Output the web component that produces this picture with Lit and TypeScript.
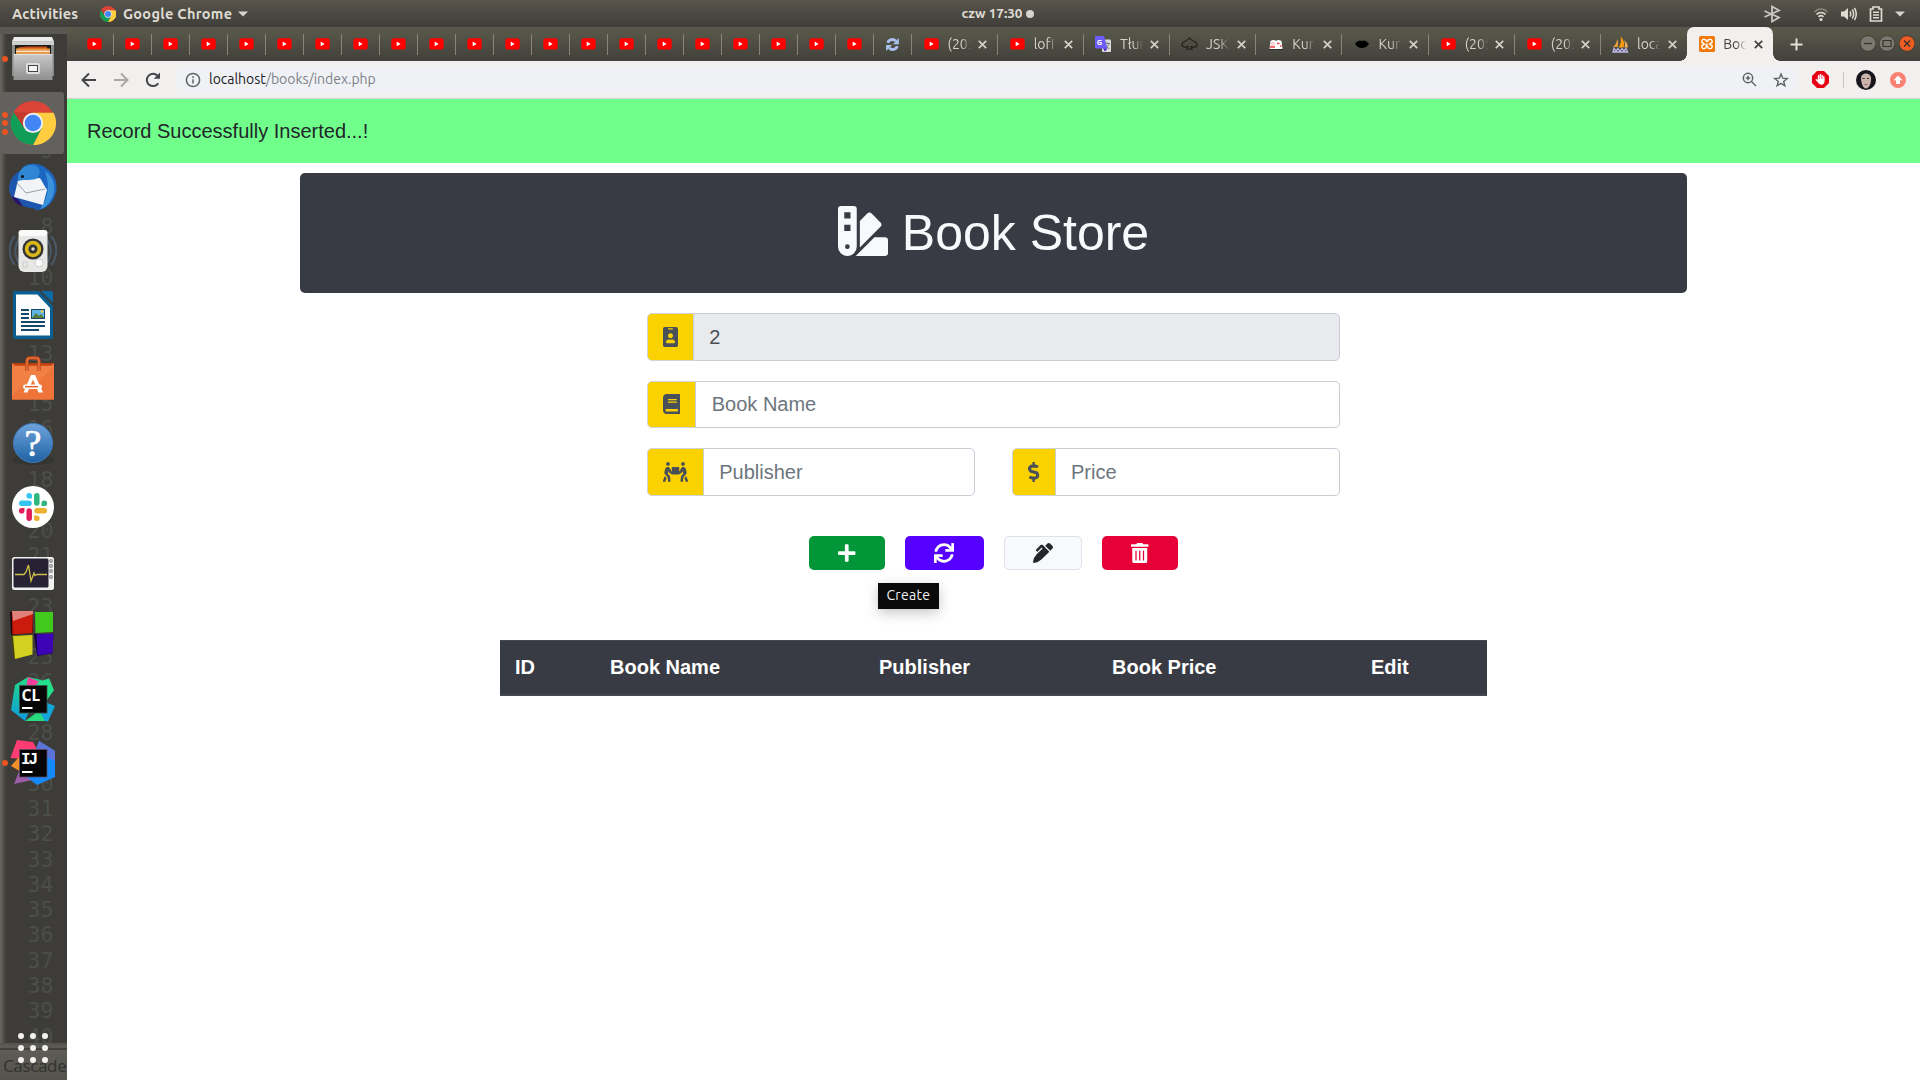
import { LitElement, html, css, svg } from "lit";
import { customElement, property } from "lit/decorators.js";

const FA: Record<string, [number, string]> = {
  swatch: [512, "M434.66,167.71h0L344.5,77.36a31.83,31.83,0,0,0-45-.07h0l-.07.07L224,152.88V424L434.66,212.9A32,32,0,0,0,434.66,167.71ZM480,320H373.09L186.68,506.51c-2.06,2.07-4.5,3.58-6.68,5.49H480a32,32,0,0,0,32-32V352A32,32,0,0,0,480,320ZM192,32A32,32,0,0,0,160,0H32A32,32,0,0,0,0,32V416a96,96,0,0,0,192,0ZM96,440a24,24,0,1,1,24-24A24,24,0,0,1,96,440Zm32-184H64V192h64Zm0-128H64V64h64Z"],
  badge: [384, "M336 0H48C21.5 0 0 21.5 0 48v416c0 26.5 21.5 48 48 48h288c26.5 0 48-21.5 48-48V48c0-26.5-21.5-48-48-48zM144 32h96c8.8 0 16 7.2 16 16s-7.2 16-16 16h-96c-8.8 0-16-7.2-16-16s7.2-16 16-16zm48 128c35.3 0 64 28.7 64 64s-28.7 64-64 64-64-28.7-64-64 28.7-64 64-64zm112 236.8c0 10.6-10 19.2-22.4 19.2H102.4C90 416 80 407.4 80 396.8v-19.2c0-31.8 30.1-57.6 67.2-57.6h5c12.3 5.1 25.7 8 39.8 8s27.6-2.9 39.8-8h5c37.1 0 67.2 25.8 67.2 57.6v19.2z"],
  book: [448, "M448 360V24c0-13.3-10.7-24-24-24H96C43 0 0 43 0 96v320c0 53 43 96 96 96h328c13.3 0 24-10.7 24-24v-16c0-7.5-3.5-14.3-8.9-18.7-4.2-15.4-4.2-59.3 0-74.7 5.4-4.3 8.9-11.1 8.9-18.6zM128 134c0-3.3 2.7-6 6-6h212c3.3 0 6 2.7 6 6v20c0 3.3-2.7 6-6 6H134c-3.3 0-6-2.7-6-6v-20zm0 64c0-3.3 2.7-6 6-6h212c3.3 0 6 2.7 6 6v20c0 3.3-2.7 6-6 6H134c-3.3 0-6-2.7-6-6v-20zm253.4 250H96c-17.7 0-32-14.3-32-32 0-17.6 14.4-32 32-32h285.4c-1.9 17.1-1.9 46.9 0 64z"],
  people: [640, "M128 96c26.5 0 48-21.5 48-48S154.5 0 128 0 80 21.5 80 48s21.5 48 48 48zm384 0c26.5 0 48-21.5 48-48S538.5 0 512 0s-48 21.5-48 48 21.5 48 48 48zm125.7 372.1l-44-110-41.1 46.4-2 18.2 27.7 69.2c5 12.5 17 20.1 29.7 20.1 4 0 8-.7 11.9-2.3 16.4-6.6 24.4-25.2 17.8-41.6zm-34.2-209.8L585 178.1c-4.6-20-18.6-36.8-37.5-44.9-18.5-8-39-6.7-56.1 3.3-22.7 13.4-39.7 34.5-48.1 59.4L432 229.8 416 240v-96c0-8.8-7.2-16-16-16H240c-8.8 0-16 7.2-16 16v96l-16.1-10.2-11.3-33.9c-8.3-25-25.4-46-48.1-59.4-17.2-10-37.6-11.3-56.1-3.3-18.9 8.1-32.9 24.9-37.5 44.9l-18.4 80.2c-4.6 20 .7 41.2 14.4 56.7l67.2 75.9 10.1 92.6C130 499.8 143.8 512 160 512c1.2 0 2.3-.1 3.5-.2 17.6-1.9 30.2-17.7 28.3-35.3l-10.1-92.8c-1.5-13-6.9-25.1-15.6-35l-43.3-49 17.6-70.3 6.8 20.4c4.1 12.5 11.9 23.4 24.5 32.6l51.1 32.5c4.6 2.9 12.1 4.6 17.2 5h160c5.1-.4 12.6-2.1 17.2-5l51.1-32.5c12.6-9.2 20.4-20 24.5-32.6l6.8-20.4 17.6 70.3-43.3 49c-8.7 9.9-14.1 22-15.6 35l-10.1 92.8c-1.9 17.6 10.8 33.4 28.3 35.3 1.2.1 2.3.2 3.5.2 16.1 0 30-12.1 31.8-28.5l10.1-92.6 67.2-75.9c13.6-15.5 19-36.7 14.4-56.7zM46.3 358.1l-44 110c-6.6 16.4 1.4 35 17.8 41.6 16.8 6.6 35.1-1.7 41.6-17.8l27.7-69.2-2-18.2-41.1-46.4z"],
  dollar: [288, "M209.2 233.4l-108-31.6C88.7 198.2 80 186.5 80 173.5c0-16.3 13.2-29.5 29.5-29.5h66.3c12.2 0 24.2 3.7 34.2 10.5 6.1 4.1 14.3 3.1 19.5-2l34.8-34c7.1-6.9 6.1-18.4-1.8-24.5C238 74.8 207.4 64.1 176 64V16c0-8.8-7.2-16-16-16h-32c-8.8 0-16 7.2-16 16v48h-2.5C45.8 64-5.4 118.7.5 183.6c4.2 46.1 39.4 83.6 83.8 96.6l102.5 30c12.5 3.7 21.2 15.3 21.2 28.3 0 16.3-13.2 29.5-29.5 29.5h-66.3C100 368 88 364.3 78 357.5c-6.1-4.1-14.3-3.1-19.5 2l-34.8 34c-7.1 6.9-6.1 18.4 1.8 24.5 24.5 19.2 55.1 29.9 86.5 30v48c0 8.8 7.2 16 16 16h32c8.8 0 16-7.2 16-16v-48.2c46.6-.9 90.3-28.6 105.7-72.7 21.5-61.6-14.6-124.8-72.5-141.7z"],
  plus: [448, "M416 208H272V64c0-17.67-14.33-32-32-32h-32c-17.67 0-32 14.33-32 32v144H32c-17.67 0-32 14.33-32 32v32c0 17.67 14.33 32 32 32h144v144c0 17.67 14.33 32 32 32h32c17.67 0 32-14.33 32-32V304h144c17.67 0 32-14.33 32-32v-32c0-17.67-14.33-32-32-32z"],
  sync: [512, "M440.65 12.57l4 82.77A247.16 247.16 0 0 0 255.83 8C134.73 8 33.91 94.92 12.29 209.82A12 12 0 0 0 24.09 224h49.05a12 12 0 0 0 11.67-9.26 175.91 175.91 0 0 1 317-56.94l-101.46-4.86a12 12 0 0 0-12.57 12v47.41a12 12 0 0 0 12 12H500a12 12 0 0 0 12-12V12a12 12 0 0 0-12-12h-47.37a12 12 0 0 0-11.98 12.57zM255.83 432a175.61 175.61 0 0 1-146-77.8l101.8 4.87a12 12 0 0 0 12.57-12v-47.4a12 12 0 0 0-12-12H12a12 12 0 0 0-12 12V500a12 12 0 0 0 12 12h47.35a12 12 0 0 0 12-12.6l-4.15-82.57A247.17 247.17 0 0 0 255.83 504c121.11 0 221.93-86.92 243.55-201.82a12 12 0 0 0-11.8-14.18h-49.05a12 12 0 0 0-11.67 9.26A175.86 175.86 0 0 1 255.83 432z"],
  pen: [512, "M497.94 74.17l-60.11-60.11c-18.75-18.75-49.16-18.75-67.91 0l-56.55 56.55 128.02 128.02 56.55-56.55c18.75-18.75 18.75-49.15 0-67.91zm-246.8-20.53c-15.62-15.62-40.94-15.62-56.56 0L75.8 172.43c-6.25 6.25-6.25 16.38 0 22.62l22.63 22.63c6.25 6.25 16.38 6.25 22.63 0l101.82-101.82 22.63 22.62L93.95 290.03A327.038 327.038 0 0 0 .17 485.11l-.03.23c-1.7 15.28 11.21 28.2 26.49 26.51a327.02 327.02 0 0 0 195.34-93.8l196.79-196.79-82.77-82.77-84.85-84.85z"],
  trash: [448, "M32 464a48 48 0 0 0 48 48h288a48 48 0 0 0 48-48V128H32zm272-256a16 16 0 0 1 32 0v224a16 16 0 0 1-32 0zm-96 0a16 16 0 0 1 32 0v224a16 16 0 0 1-32 0zm-96 0a16 16 0 0 1 32 0v224a16 16 0 0 1-32 0zM432 32H312l-9.4-18.7A24 24 0 0 0 281.1 0H166.8a23.72 23.72 0 0 0-21.4 13.3L136 32H16A16 16 0 0 0 0 48v32a16 16 0 0 0 16 16h416a16 16 0 0 0 16-16V48a16 16 0 0 0-16-16z"],
};

const fa = (name: string, size = 20) => {
  const [w, d] = FA[name];
  return html`<svg width=${(w / 512) * size} height=${size} viewBox="0 0 ${w} 512" fill="currentColor"><path d=${d}></path></svg>`;
};

const chromeArt = svg`
  <circle cx="24" cy="24" r="24" fill="#db4437"/>
  <path d="M24 13H46.4A24 24 0 0 1 24 48L33.5 29.5Z" fill="#ffcd40"/>
  <path d="M3.2 12A24 24 0 0 0 24 48L33.5 29.5L24 35L14.5 29.5Z" fill="#0f9d58"/>
  <path d="M3.2 12L14.5 29.5L24 13Z" fill="#c23b2e"/>
  <circle cx="24" cy="24" r="11" fill="#f1f1f1"/><circle cx="24" cy="24" r="9" fill="#4285f4"/>`;

const youtube = html`<svg width="15" height="12" viewBox="0 0 15 12"><rect x=".3" y=".3" width="14.4" height="11.2" rx="2.6" fill="#f00"/><path d="M5.7 3.6L9.6 5.9L5.7 8.2Z" fill="#fff"/></svg>`;

const ICONS: Record<string, unknown> = {
  youtube,
  reload: html`<svg width="15" height="15" viewBox="0 0 16 16"><g fill="none" stroke="#a9c3ee" stroke-width="3"><path d="M2.8 6.2C4.5 2.2 9 1.7 11.6 4.2"/><path d="M13.2 9.8C11.5 13.8 7 14.3 4.4 11.8"/></g><path d="M14.8 1V7.6H8.4ZM1.2 15V8.4H7.6Z" fill="#a9c3ee"/></svg>`,
  translate: html`<svg width="16" height="16" viewBox="0 0 16 16"><rect x="7" y="3.4" width="9" height="12.6" rx="1" fill="#dcdcdc"/><path d="M9 7.5h6M12 6v1.5M14 7.5c-.6 2.5-2 4-4 5M10.5 9c1 2 2 3 4 3.600" stroke="#7b7f86" fill="none"/><path d="M1 0H9L12.4 12.500H1A1 1 0 0 1 0 11.500V1A1 1 0 0 1 1 0Z" fill="#6a5cf5"/><path d="M8 12.500H12.400L10 15.600Z" fill="#4719c9"/><text x="1.800" y="9.200" font-size="7.500" font-weight="700" font-family="Noto Sans, sans-serif" fill="#fff">G</text></svg>`,
  spade: html`<svg width="17" height="16" viewBox="0 0 17 16" fill="none" stroke="#24241f" stroke-width="1.300"><path d="M8.500 2C10.500 5 16 5.500 16 8.500C16 11.500 11.500 11.800 9.800 10.200L11 13.200H6L7.200 10.200C5.500 11.800 1 11.500 1 8.500C1 5.500 6.500 5 8.500 2Z"/></svg>`,
  openbook: html`<svg width="14" height="13" viewBox="0 0 14 13"><path d="M1.500 3C4 1.500 6 2 7 3C8 2 10 1.500 12.500 3L13.500 11H.5Z" fill="#fff"/><path d="M2 5H5.800M1.800 7H5.800" stroke="#f6a4a8"/><path d="M1 9H6M8 5.500h2.500M11 8h1.500" stroke="#ec3b46" stroke-width="1.400"/><path d="M0 11.500H6.500M8 11.500H14" stroke="#2a2a28"/></svg>`,
  lips: html`<svg width="16" height="14" viewBox="0 0 16 14"><path d="M1 6.500C4 4 6 2.500 8 4C10 2.500 12 4 15 6.500C12 12.500 4 12.500 1 6.500Z" fill="#000"/></svg>`,
  sails: html`<svg width="17" height="17" viewBox="0 0 17 17"><path d="M1 11C3.500 9 5 6 5 3C6.500 5 6.500 8 5.500 11Z" fill="#e8a13b"/><path d="M6.500 11.500C9 8 9.500 4 8.500 0C12 4 13 8 11.500 11.500Z" fill="#f89c0e"/><path d="M12.400 11.500C13.500 9 13 6 12 4C14.800 6 16 9 15.800 11.500Z" fill="#e9b05b"/><path d="M1 16L2 12.500L4 15L6 12.500L8 15.500L10 12.500L12 15L14 12.500L15.500 16Z" fill="none" stroke="#b9b8e6" stroke-width="1.300"/></svg>`,
  xampp: html`<svg width="16" height="16" viewBox="0 0 16 16"><rect width="16" height="16" rx="1.500" fill="#ef7a0a"/><path d="M7.300 8H8.700M7.300 6V5A1.700 1.700 0 0 0 5.600 3.500H5.200A1.900 1.900 0 0 0 4.300 7.200L5.300 8L4.300 8.800A1.900 1.900 0 0 0 5.200 12.500H5.600A1.700 1.700 0 0 0 7.300 11V8M8.700 6V5A1.700 1.700 0 0 1 10.400 3.500H10.800A1.900 1.900 0 0 1 11.700 7.200L10.700 8L11.700 8.800A1.900 1.900 0 0 1 10.800 12.500H10.400A1.700 1.700 0 0 1 8.700 11V9.500" fill="none" stroke="#fff" stroke-width="1.400"/></svg>`,
};

const LAUNCHER = [
  { dots: 1, art: svg`
    <defs><linearGradient id="fg" x1="0" y1="0" x2="0" y2="1"><stop offset="0" stop-color="#c9c9c9"/><stop offset="1" stop-color="#8f8f8f"/></linearGradient></defs>
    <path d="M3 6H45V41H43V44H5V41H3Z" fill="#8b8b8b"/><path d="M5 2H43L45 6.500H3Z" fill="#ececec"/><path d="M3 6.500H45V10H3Z" fill="#cfcfcf"/>
    <rect x="6" y="10" width="36" height="10" fill="#1d1a17"/><path d="M9 12.500L18 11.500H38L39 19H8Z" fill="#c9501d"/><rect x="7" y="13.500" width="34" height="2" fill="#ee9a3d"/><rect x="7" y="15.500" width="34" height="1.500" fill="#fbe3c4"/><rect x="7" y="17" width="34" height="2.500" fill="#e99a4a"/>
    <path d="M4.500 19H43.500V45H4.500Z" fill="url(#fg)"/><path d="M5 19.500H43" stroke="#e2e2e2"/>
    <rect x="17" y="28" width="14" height="11" rx="2" fill="#dedede"/><rect x="19.500" y="30.500" width="9" height="6" fill="#f4f4f4" stroke="#444"/>` },
  { dots: 3, active: true, art: svg`<g transform="translate(1.900 1.900) scale(.92)">${chromeArt}</g>` },
  { dots: 0, art: svg`
    <path d="M14 4C20-1 32 0 38 6C46 11 50 22 46 32C43 42 34 48 26 47C30 44 34 41 35 36L8 14Z" fill="#1c66c2"/>
    <path d="M0 26C0 15 8 7 18 6L34 30L32 46C15 46 2 40 0 26Z" fill="#1e55ad"/>
    <path d="M36 8C46 14 48 27 42 37C39 42 35 45 31 46C38 37 42 25 36 8Z" fill="#3a91dc"/>
    <path d="M3 33C4 38 8 42 14 43L9 36Z" fill="#2b1168"/>
    <path d="M9 17L31 15L38 27L34 42L5 34Z" fill="#f1f3f6"/><path d="M8 20L17 30L36 26" fill="none" stroke="#9a9fa8"/>
    <path d="M9 18C8 10 13 2 22 2C31 2 33 10 28 15C25 18 14 16 9 18Z" fill="#2f86d3"/><circle cx="13.500" cy="13.500" r="1.500" fill="#111"/>` },
  { dots: 0, art: svg`
    <g fill="none" stroke="#4b6076" stroke-width="2" opacity=".8"><path d="M6 9C-1 17-1 30 6 38M10 12C5 20 5 28 10 36M42 9C49 17 49 30 42 38M38 12C43 20 43 28 38 36"/></g>
    <rect x="9.500" y="3" width="29" height="42" rx="6" fill="#e7e7e5"/><rect x="9.500" y="3" width="29" height="6" rx="3" fill="#fafafa"/>
    <circle cx="24" cy="22" r="10.500" fill="#333"/><circle cx="24" cy="22" r="8.200" fill="#d8b61c"/><circle cx="24" cy="22" r="4.500" fill="#35342e"/><circle cx="24" cy="22" r="1.700" fill="#ddd"/><circle cx="30" cy="36" r="4" fill="#fafafa" stroke="#cfcfcf"/><rect x="14" y="35" width="4" height="5" fill="none" stroke="#ccc"/>` },
  { dots: 0, art: svg`
    <path d="M6 0H30L44 15V46A2 2 0 0 1 42 48H6A2 2 0 0 1 4 46V2A2 2 0 0 1 6 0Z" fill="#0b5d92"/><path d="M30 0H44V14Z" fill="#3d3c38"/><path d="M32 0H42A2 2 0 0 1 44 2V12Z" fill="#0d6aa5"/>
    <path d="M7 3.500H28.500L41 17V44.500H7Z" fill="#fdfdfd"/><g stroke="#15486b" stroke-width="2"><path d="M12 19H20M12 23H20M12 27H20M12 31H36M12 35H36M12 39H30"/></g>
    <rect x="22.500" y="18.500" width="13" height="9" fill="#5fb5e4" stroke="#15486b"/><path d="M23 27L27 22L30 25L32 23L35 27Z" fill="#5a7a3a"/><circle cx="33" cy="20.500" r="1.300" fill="#ffd23c"/>` },
  { dots: 0, art: svg`
    <path d="M3 8H45V12H3Z" fill="#b9400f"/><path d="M3 8L6 10.500H42L45 8V44.500H3Z" fill="#ec6d33"/><path d="M3 12H45V44.500H3Z" fill="#ef7439"/><path d="M3 11H45L30 26Q10 30 3 42Z" fill="#f2894f" opacity=".6"/>
    <path d="M18 16V6Q18 3 21 3H27Q30 3 30 6V16" fill="none" stroke="#c34a18" stroke-width="3.500"/><path d="M18 16V6Q18 3 21 3H27Q30 3 30 6V16" fill="none" stroke="#ee7d4a" stroke-width="1.200"/>
    <path d="M22 20H26L34 37.500H29.500L24 24.500L18.500 37.500H14.500Z" fill="#fff"/><rect x="14" y="29.500" width="19" height="4.500" rx="2.200" fill="#fff"/><path d="M16 31.700H29" stroke="#e5622a" stroke-width="1.500"/>` },
  { dots: 0, art: svg`
    <defs><linearGradient id="hg" x1="0" y1="0" x2="0" y2="1"><stop offset="0" stop-color="#6fa3dd"/><stop offset="1" stop-color="#1f62a4"/></linearGradient></defs>
    <ellipse cx="24" cy="41" rx="21" ry="5" fill="#2b2b28" opacity=".5"/><circle cx="24" cy="24" r="19.500" fill="url(#hg)" stroke="#3d7fc2"/><text x="24" y="36.500" text-anchor="middle" font-family="Liberation Serif, serif" font-size="38" fill="#fff" stroke="#fff" stroke-width=".7">?</text>` },
  { dots: 0, art: svg`
    <circle cx="24" cy="24" r="21" fill="#fff"/>
    <g stroke-width="5.500" stroke-linecap="round"><path d="M12.700 20.200H20" stroke="#36c5f0"/><path d="M27.800 12.700V20" stroke="#2eb67d"/><path d="M28 27.800H35.300" stroke="#ecb22e"/><path d="M20.200 28V35.300" stroke="#e01e5a"/></g>
    <path d="M23 16V12.700A2.800 2.800 0 1 0 20.200 15.500H23Z" fill="#36c5f0"/><path d="M32 23H35.300A2.800 2.800 0 1 0 32.500 20.200V23Z" fill="#2eb67d"/><path d="M25 32V35.300A2.800 2.800 0 1 0 27.800 32.500H25Z" fill="#ecb22e"/><path d="M16 25H12.700A2.800 2.800 0 1 0 15.500 27.800V25Z" fill="#e01e5a"/>` },
  { dots: 0, art: svg`
    <rect x="3" y="10" width="42" height="33" rx="2.500" fill="#f0f0ef"/><rect x="4.500" y="11.500" width="35" height="29" rx="1.500" fill="#262234"/>
    <path d="M6 27.500H15L17 25L19.500 18L22 34L25 26L26 28.500L28 27.500H38" fill="none" stroke="#cfc04a" stroke-width="1.300"/>
    <g fill="none" stroke="#888" stroke-width="1.200"><circle cx="42" cy="14" r="1.300"/><circle cx="42" cy="19" r="1.300"/><circle cx="42" cy="24" r="1.300"/><circle cx="42" cy="30" r="1.300"/></g>` },
  { dots: 0, art: svg`
    <path d="M1 1L4 0H24V22L2 24Z" fill="#1b0505"/><path d="M3 0H24L23.500 22L3.500 23.500Z" fill="#cb1b0d"/><path d="M3 0H24V3L4 10Z" fill="#fff" opacity=".45"/>
    <path d="M26 1H44V21L26.500 22Z" fill="#42c91d"/><path d="M2 24.500L23 24V44L5 48Z" fill="#45450a"/><path d="M4 25L23.500 24V43.500L6 48Z" fill="#d3d022"/><path d="M25 23H44.500L43 42.500L28 45Z" fill="#16003f"/><path d="M27.500 23.500L44.500 22.500L43.500 42L28.500 44.500Z" fill="#3c04b4"/>` },
  { dots: 0, art: svg`
    <defs><linearGradient id="cg" x1="0" y1="0" x2="0" y2="1"><stop offset="0" stop-color="#22da87"/><stop offset="1" stop-color="#0d9bdd"/></linearGradient></defs>
    <path d="M6 10L19 2L33 5L25 25L16 46L2 35Z" fill="url(#cg)"/><path d="M19 2L31 7L24 12H17Z" fill="#f23d9b"/><path d="M29 7L40 3.500L45 15L38 25L25 15Z" fill="#25e08a"/><path d="M36 27L46 31L39 46.500L22 44Z" fill="#14a6d8"/><path d="M16 46L30 36L36 46Z" fill="#27db7f"/>
    <rect x="10.500" y="10.500" width="27.500" height="27.500" fill="#060606" stroke="#3a5548" stroke-width=".8"/><text x="12.500" y="25.500" font-family="Noto Sans, sans-serif" font-weight="700" font-size="15.500" fill="#fff">CL</text><rect x="13" y="32" width="10.500" height="2" fill="#fff"/>` },
  { dots: 1, art: svg`
    <path d="M8 1L24 3L29 12L15 20L1.500 19Z" fill="#ff3d72"/><path d="M2 27L10 18L14 34Z" fill="#f58f2c"/><path d="M11 30L28 40L5 45Z" fill="#9b5ba5"/><path d="M30 2L46 12V38L28 46L18 38L30 20Z" fill="#1689fb"/><path d="M30 2L46 12V22L26 12Z" fill="#5d72d5"/>
    <rect x="10.500" y="10.500" width="27.500" height="27.500" fill="#060606" stroke="#5a4a6a" stroke-width=".8"/><text x="12" y="25" font-family="Liberation Mono, monospace" font-weight="700" font-size="16" textLength="17" fill="#fff">IJ</text><rect x="13" y="32" width="10.500" height="2" fill="#fff"/>` },
];

const LINES = [3, 5, 8, 10, 13, 15, 16, 18, 20, 21, 23, 25, 26, 28];

@customElement("desktop-launcher")
class DesktopLauncher extends LitElement {
  static styles = css`
    :host { display: flex; flex-direction: column; position: relative; width: 67px; height: 1053px; overflow: hidden;
      background: linear-gradient(90deg, #64635c 0, #5f5e58 2px, #4a4944 4px, #3d3c38 7px, #3d3c38 100%); }
    .ghost { position: absolute; right: 13.5px; top: 10px; font: 21.500px/25.300px "DejaVu Sans Mono", monospace; color: #4b4e49; text-align: right; }
    .ghost div { height: 25.300px; }
    .peek { position: absolute; left: 0; right: 0; top: 0; height: 7px; background: #595853; }
    .status { position: absolute; left: 0; right: 0; bottom: 0; height: 37px; border-top: 2px solid #55544f; box-sizing: border-box; background: linear-gradient(#5b5a55 3px, #42413d 3px, #42413d 5px, #5d5c56 5px, #54534e); color: #35342f; font: 17px/41px "Noto Sans", sans-serif; padding-left: 3px; overflow: hidden; letter-spacing: -.4px; }
    .item { position: relative; height: 64px; display: flex; align-items: center; justify-content: center; flex: none; padding-right: 1px; }
    .plate { width: 62px; height: 62px; border-radius: 3px; display: flex; align-items: center; justify-content: center; }
    .on { background: #62615e; }
    .dots { position: absolute; left: 2px; top: 0; bottom: 0; width: 6px; display: flex; flex-direction: column; justify-content: center; gap: 2.500px; }
    .dots i { width: 6px; height: 6px; border-radius: 50%; background: #e95420; }
    .grid { position: absolute; left: 18px; bottom: 17px; display: grid; grid-template-columns: repeat(3, 6px); gap: 6px; }
    .grid i { width: 6px; height: 6px; border-radius: 50%; background: #f2f1ef; }
  `;
  render() {
    return html`
      <div class="ghost">${Array.from({ length: 40 }, (_, i) => html`<div>${LINES.includes(i + 1) || i > 28 ? i + 1 : ""}</div>`)}</div>
      <div class="peek"></div><div class="status">Cascade</div>
      ${LAUNCHER.map((a) => html`<div class="item">
        <div class="plate ${a.active ? "on" : ""}"><svg width="48" height="48" viewBox="0 0 48 48">${a.art}</svg></div>
        <div class="dots">${Array.from({ length: a.dots }, () => html`<i></i>`)}</div></div>`)}
      <div class="grid">${Array.from({ length: 9 }, () => html`<i></i>`)}</div>`;
  }
}

@customElement("system-bar")
class SystemBar extends LitElement {
  static styles = css`
    :host { display: grid; grid-template-columns: 961.500px auto 1fr; align-items: center; height: 27px; background: linear-gradient(#58544c, #3f3e39); color: #dfdbd2; font: 600 14.500px/27px "Ubuntu", "Noto Sans", sans-serif; box-sizing: border-box; }
    .left { display: flex; align-items: center; padding-left: 12px; }
    .act { width: 68px; letter-spacing: .18px; white-space: nowrap; }
    .app { margin-left: 7px; margin-right: 6px; letter-spacing: .3px; white-space: nowrap; }
    .left svg { flex: none; }
    .logo { margin-left: 20px; }
    .clock { display: flex; align-items: center; gap: 4px; font-size: 13.500px; }
    .dot { width: 8px; height: 8px; border-radius: 50%; background: #d6d3cd; }
    .right { display: flex; align-items: center; justify-content: flex-end; padding-right: 15px; }
    .gap { width: 20px; }
    .right svg { margin-left: 12px; }
  `;
  render() {
    return html`
      <div class="left"><span class="act">Activities</span>
        <svg class="logo" width="16" height="16" viewBox="0 0 48 48">${chromeArt}</svg>
        <span class="app">Google Chrome</span>
        <svg width="10" height="6" viewBox="0 0 10 6"><path d="M0 .5H10L5 5.500Z" fill="#d6d3cd"/></svg></div>
      <div class="clock"><span>czw 17:30</span><i class="dot"></i></div>
      <div class="right">
        <svg width="18" height="18" viewBox="0 0 18 18" fill="none" stroke="#c9c6c0" stroke-width="1.800"><path d="M1.500 6L16 12.500L9 16.500V1.500L16 5.500L1.500 12"/></svg>
        <i class="gap"></i>
        <svg width="16" height="16" viewBox="0 0 16 16" fill="none" stroke="#dfdbd2" stroke-width="1.600"><path d="M1.500 6.200C5 2 11 2 14.500 6.200" opacity=".4"/><path d="M3.500 8.500C6 5.800 10 5.800 12.500 8.500"/><path d="M5.500 10.800C7 9.400 9 9.400 10.500 10.800"/><circle cx="8" cy="13.500" r="1.600" fill="#dfdbd2" stroke="none"/></svg>
        <svg width="16" height="16" viewBox="0 0 16 16" fill="none" stroke="#dfdbd2" stroke-width="1.500"><path d="M0 5.500H3L7 2V14L3 10.500H0Z" fill="#dfdbd2" stroke="none"/><path d="M9 5.500Q10.500 8 9 10.500M11.300 3.500Q14 8 11.300 12.500M13.500 2Q17 8 13.500 14"/></svg>
        <svg width="14" height="18" viewBox="0 0 14 18" fill="none" stroke="#dfdbd2" stroke-width="1.700"><path d="M4 2H10V4H12.500V16H1.500V4H4Z"/><path d="M4 7.200H10M4 10H10M4 12.800H10" stroke-width="1.500"/></svg>
        <svg width="10" height="6" viewBox="0 0 10 6"><path d="M0 .5H10L5 5.500Z" fill="#d6d3cd"/></svg>
      </div>`;
  }
}

const TABS: [string, string][] = [["youtube", "(205"], ["youtube", "lofi "], ["translate", "Tłum"], ["spade", "JSK"], ["openbook", "Kurs"], ["lips", "Kurs"], ["youtube", "(205"], ["youtube", "(205"], ["sails", "loca"]];

@customElement("tab-strip")
class TabStrip extends LitElement {
  static styles = css`
    :host { display: flex; height: 34px; background: linear-gradient(#5a5a4b, #42413c); font: 14px/34px "Ubuntu", "Noto Sans", sans-serif; color: #d4d1c9; padding-left: 8.500px; }
    .pin, .tab { display: flex; align-items: center; position: relative; box-sizing: border-box; flex: none; }
    .pin { width: 38px; justify-content: center; padding-right: 1px; }
    .pin::after, .tab.sep::after { content: ""; position: absolute; right: 0; top: 7px; height: 21px; width: 1px; background: #87867c; }
    .tab { width: 86.200px; }
    .fav { width: 18px; display: flex; justify-content: center; margin-left: 10.500px; flex: none; }
    .name { width: 24px; margin-left: 7.500px; overflow: hidden; white-space: nowrap; -webkit-mask-image: linear-gradient(90deg, #000 55%, transparent 98%); mask-image: linear-gradient(90deg, #000 55%, transparent 98%); }
    .close { margin-left: 6.500px; }
    .active { background: #f2f0ef; color: #45433f; border-radius: 7px 7px 0 0; }
    .active::before, .active::after { content: ""; position: absolute; bottom: 0; width: 7px; height: 7px; }
    .active::before { left: -7px; background: radial-gradient(circle at 0 0, transparent 6.500px, #f2f0ef 7px); }
    .active::after { right: -7px; background: radial-gradient(circle at 100% 0, transparent 6.500px, #f2f0ef 7px); }
    .add { margin: 11px 0 0 16.500px; }
    .win { margin-left: auto; display: flex; gap: 3.700px; padding: 8px 5px 0 0; height: 17px; }
  `;
  render() {
    const x = html`<svg class="close" width="9" height="9" viewBox="0 0 9 9"><path d="M.8 .8L8.200 8.200M8.200 .8L.8 8.200" stroke="currentColor" stroke-width="1.700"/></svg>`;
    return html`
      ${Array.from({ length: 22 }, (_, i) => html`<div class="pin">${i < 21 ? youtube : ICONS.reload}</div>`)}
      ${TABS.map(([i, t], n) => html`<div class="tab ${n < 8 ? "sep" : ""}"><span class="fav">${ICONS[i]}</span><span class="name">${t}</span>${x}</div>`)}
      <div class="tab active"><span class="fav">${ICONS.xampp}</span><span class="name">Boo</span>${x}</div>
      <svg class="add" width="13" height="13" viewBox="0 0 13 13"><path d="M6.500 .5V12.500M.5 6.500H12.500" stroke="#e4e2dc" stroke-width="2"/></svg>
      <div class="win">
        ${["M4.500 8.500H12.500", "M4.500 5.500H12.500V11.500H4.500Z", "M5.500 5.500L11.500 11.500M11.500 5.500L5.500 11.500"].map((d, i) => html`<svg width="16" height="17" viewBox="0 0 16 17"><circle cx="8" cy="8.500" r="7.800" fill=${i === 2 ? "#ed5d22" : "#7b7970"} stroke="#373632" stroke-width=".7"/><path d=${d} transform="translate(-.5 0)" fill="none" stroke="#34332f" stroke-width="1.200"/></svg>`)}
      </div>`;
  }
}

@customElement("address-bar")
class AddressBar extends LitElement {
  static styles = css`
    :host { display: flex; align-items: center; height: 38px; box-sizing: border-box; border-bottom: 1px solid #d3cfd3; background: #f2f0ef; color: #4b4a48; padding: 0 14px 0 12px; }
    .nav { display: flex; gap: 12px; margin-right: 12px; }
    .omni { flex: 1; height: 28px; border-radius: 14px; background: #f0f1f4; display: flex; align-items: center; padding: 0 10px; font: 14px/28px "Ubuntu", "Noto Sans", sans-serif; color: #7d828b; letter-spacing: -.02px; }
    .url { margin-left: 8px; flex: 1; padding-bottom: 2px; }
    .url b { color: #202124; font-weight: 400; }
    .star { margin-left: 16px; }
    .ext { display: flex; align-items: center; margin-left: 13px; }
    .bar { width: 1px; height: 16px; background: #c9c7c7; margin: 0 12px 0 14px; }
    .up { margin-left: 14px; }
  `;
  render() {
    return html`
      <div class="nav">
        <svg width="20" height="20" viewBox="0 0 20 20" fill="none" stroke="#45444a" stroke-width="2"><path d="M17 10H4M10 3.500L3.500 10L10 16.500"/></svg>
        <svg width="20" height="20" viewBox="0 0 20 20" fill="none" stroke="#a9a7a6" stroke-width="2"><path d="M3 10H16M10 3.500L16.500 10L10 16.500"/></svg>
        <svg width="20" height="20" viewBox="0 0 20 20" fill="none" stroke="#45444a" stroke-width="2"><path d="M15.300 13.200A6.200 6.200 0 1 1 14.500 5.600"/><path d="M17 2.500V8.800H10.700Z" fill="#45444a" stroke="none"/></svg>
      </div>
      <div class="omni">
        <svg width="16" height="16" viewBox="0 0 16 16" fill="none" stroke="#5f6368" stroke-width="1.500"><circle cx="8" cy="8" r="6.600"/><path d="M8 7.200V11.500M8 4.300V5.900"/></svg>
        <span class="url"><b>localhost</b>/books/index.php</span>
        <svg width="15" height="15" viewBox="0 0 15 15" fill="none" stroke="#5f6368" stroke-width="1.500"><circle cx="6" cy="6" r="4.700"/><path d="M9.500 9.500L14 14M6 3.800V8.200M3.800 6H8.200" stroke-width="1.400"/></svg>
        <svg class="star" width="16" height="16" viewBox="0 0 16 16" fill="none" stroke="#5f6368" stroke-width="1.400"><path d="M8 2L9.700 6.200L14.200 6.500L10.700 9.400L11.900 13.800L8 11.400L4.100 13.800L5.300 9.400L1.800 6.500L6.300 6.200Z"/></svg>
      </div>
      <div class="ext">
        <svg width="17" height="17" viewBox="0 0 17 17"><path d="M5 0H12L17 5V12L12 17H5L0 12V5Z" fill="#e60012"/><path d="M6.500 8.500V4.800M8.300 8V3.600M10.100 8V4.200M11.800 9V5.600M6.500 11L4.300 8.800" stroke="#fff" stroke-width="1.400" stroke-linecap="round"/><path d="M5.800 8H12.500V10.500C12.500 14.500 7.500 14.500 6 11.500Z" fill="#fff"/></svg>
        <i class="bar"></i>
        <svg width="20" height="20" viewBox="0 0 20 20"><circle cx="10" cy="10" r="10" fill="#18151c"/><path d="M5 8C5 2.500 14 1.500 15 7.500C15.500 13 13 18.500 10 18.500C7 18.500 5 13 5 8Z" fill="#c9b4ae"/><path d="M6.500 8.500H8.700M11 8.500H13.200" stroke="#43322f" stroke-width="1.200"/><path d="M8.500 14.500H11.500" stroke="#9b5f5c"/></svg>
        <svg class="up" width="16" height="16" viewBox="0 0 16 16"><circle cx="8" cy="8" r="8" fill="#fa8072"/><path d="M8 3.500L12.500 8.200H10V12H6V8.200H3.500Z" fill="#fff"/></svg>
      </div>`;
  }
}

@customElement("field-input")
class FieldInput extends LitElement {
  @property() icon = "";
  @property() label = "";
  @property() value = "";
  static styles = css`
    :host { display: flex; height: 47.500px; min-width: 0; }
    .addon { display: flex; align-items: center; padding: 0 15px; background: #fbd200; border: 1px solid #ced4da; border-radius: 5px 0 0 5px; color: #495057; flex: none; }
    .box { flex: 1; width: 0; min-width: 0; margin-left: -1px; box-sizing: border-box; border: 1px solid #c9cdd6; border-radius: 0 5px 5px 0; padding: 0 15.500px; font: 20px/30px "Liberation Sans", Arial, sans-serif; color: #495057; background: #fff; outline: none; }
    .box::placeholder { color: #6c757d; opacity: 1; }
    .box:disabled { background: #e9eaee; -webkit-text-fill-color: #495057; }
  `;
  render() {
    return html`<span class="addon">${fa(this.icon)}</span><input class="box" placeholder=${this.label} .value=${this.value} ?disabled=${this.value !== ""} />`;
  }
}

@customElement("book-store")
class BookStore extends LitElement {
  static styles = css`
    :host { display: block; background: #fff; font: 20px/30px "Liberation Sans", Arial, sans-serif; color: #212529; }
    .alert { background: #71ff8c; height: 64px; line-height: 64px; padding-left: 20px; box-sizing: border-box; }
    .wrap { width: 1387.500px; margin: 10px auto 0; display: flex; flex-direction: column; align-items: center; }
    .head { width: 100%; height: 120px; box-sizing: border-box; background: #393b44; color: #f8f9fc; border-radius: 5px; display: flex; align-items: center; justify-content: center; gap: 14px; font-size: 50px; line-height: 60px; }
    .head svg { margin-top: -4px; }
    form { width: 693.500px; display: flex; flex-direction: column; gap: 20px; margin-top: 20px; }
    .row { display: grid; grid-template-columns: 1fr 1fr; gap: 37.500px; }
    .actions { display: flex; gap: 20px; margin-top: 40px; position: relative; }
    .btn { height: 34px; box-sizing: border-box; padding: 0 28.300px; border: 1px solid transparent; border-radius: 5px; display: flex; align-items: center; color: #fff; }
    .create { background: #029639; } .sync { background: #5600ff; } .edit { background: #f8f9fc; color: #23262b; border-color: #dfe0e8; } .del { background: #e50035; }
    .tip { position: absolute; left: 69px; top: 47px; width: 61px; height: 26px; background: #0b0b0b; color: #f2f2f2; box-shadow: 0 4px 13px rgba(0,0,0,.22); font: 14px/25px "Ubuntu", "Noto Sans", sans-serif; letter-spacing: .3px; text-align: center; }
    .table { width: 987px; height: 56px; margin-top: 70px; box-sizing: border-box; background: #393b44; border-top: 1px solid #454854; border-bottom: 2px solid #454854; color: #fff; font-weight: 700; display: grid; grid-template-columns: 95px 269px 233px 259px 1fr; align-items: center; }
    .table span { padding-left: 15px; }
  `;
  render() {
    return html`
      <div class="alert">Record Successfully Inserted...!</div>
      <div class="wrap">
        <div class="head">${fa("swatch", 50)}<span>Book Store</span></div>
        <form>
          <field-input icon="badge" value="2"></field-input>
          <field-input icon="book" label="Book Name"></field-input>
          <div class="row"><field-input icon="people" label="Publisher"></field-input><field-input icon="dollar" label="Price"></field-input></div>
        </form>
        <div class="actions">
          <div class="btn create">${fa("plus")}</div><div class="btn sync">${fa("sync")}</div><div class="btn edit">${fa("pen")}</div><div class="btn del">${fa("trash")}</div>
          <div class="tip">Create</div>
        </div>
        <div class="table">${["ID", "Book Name", "Publisher", "Book Price", "Edit"].map((h) => html`<span>${h}</span>`)}</div>
      </div>`;
  }
}

@customElement("app-root")
class AppRoot extends LitElement {
  static styles = css`
    :host { display: grid; grid-template: 27px 1053px / 67px 1853px; width: 1920px; height: 1080px; overflow: hidden; background: #fff; }
    system-bar { grid-column: 1 / -1; }
    .window { display: flex; flex-direction: column; min-width: 0; }
  `;
  render() {
    return html`<system-bar></system-bar><desktop-launcher></desktop-launcher>
      <div class="window"><tab-strip></tab-strip><address-bar></address-bar><book-store></book-store></div>`;
  }
}
